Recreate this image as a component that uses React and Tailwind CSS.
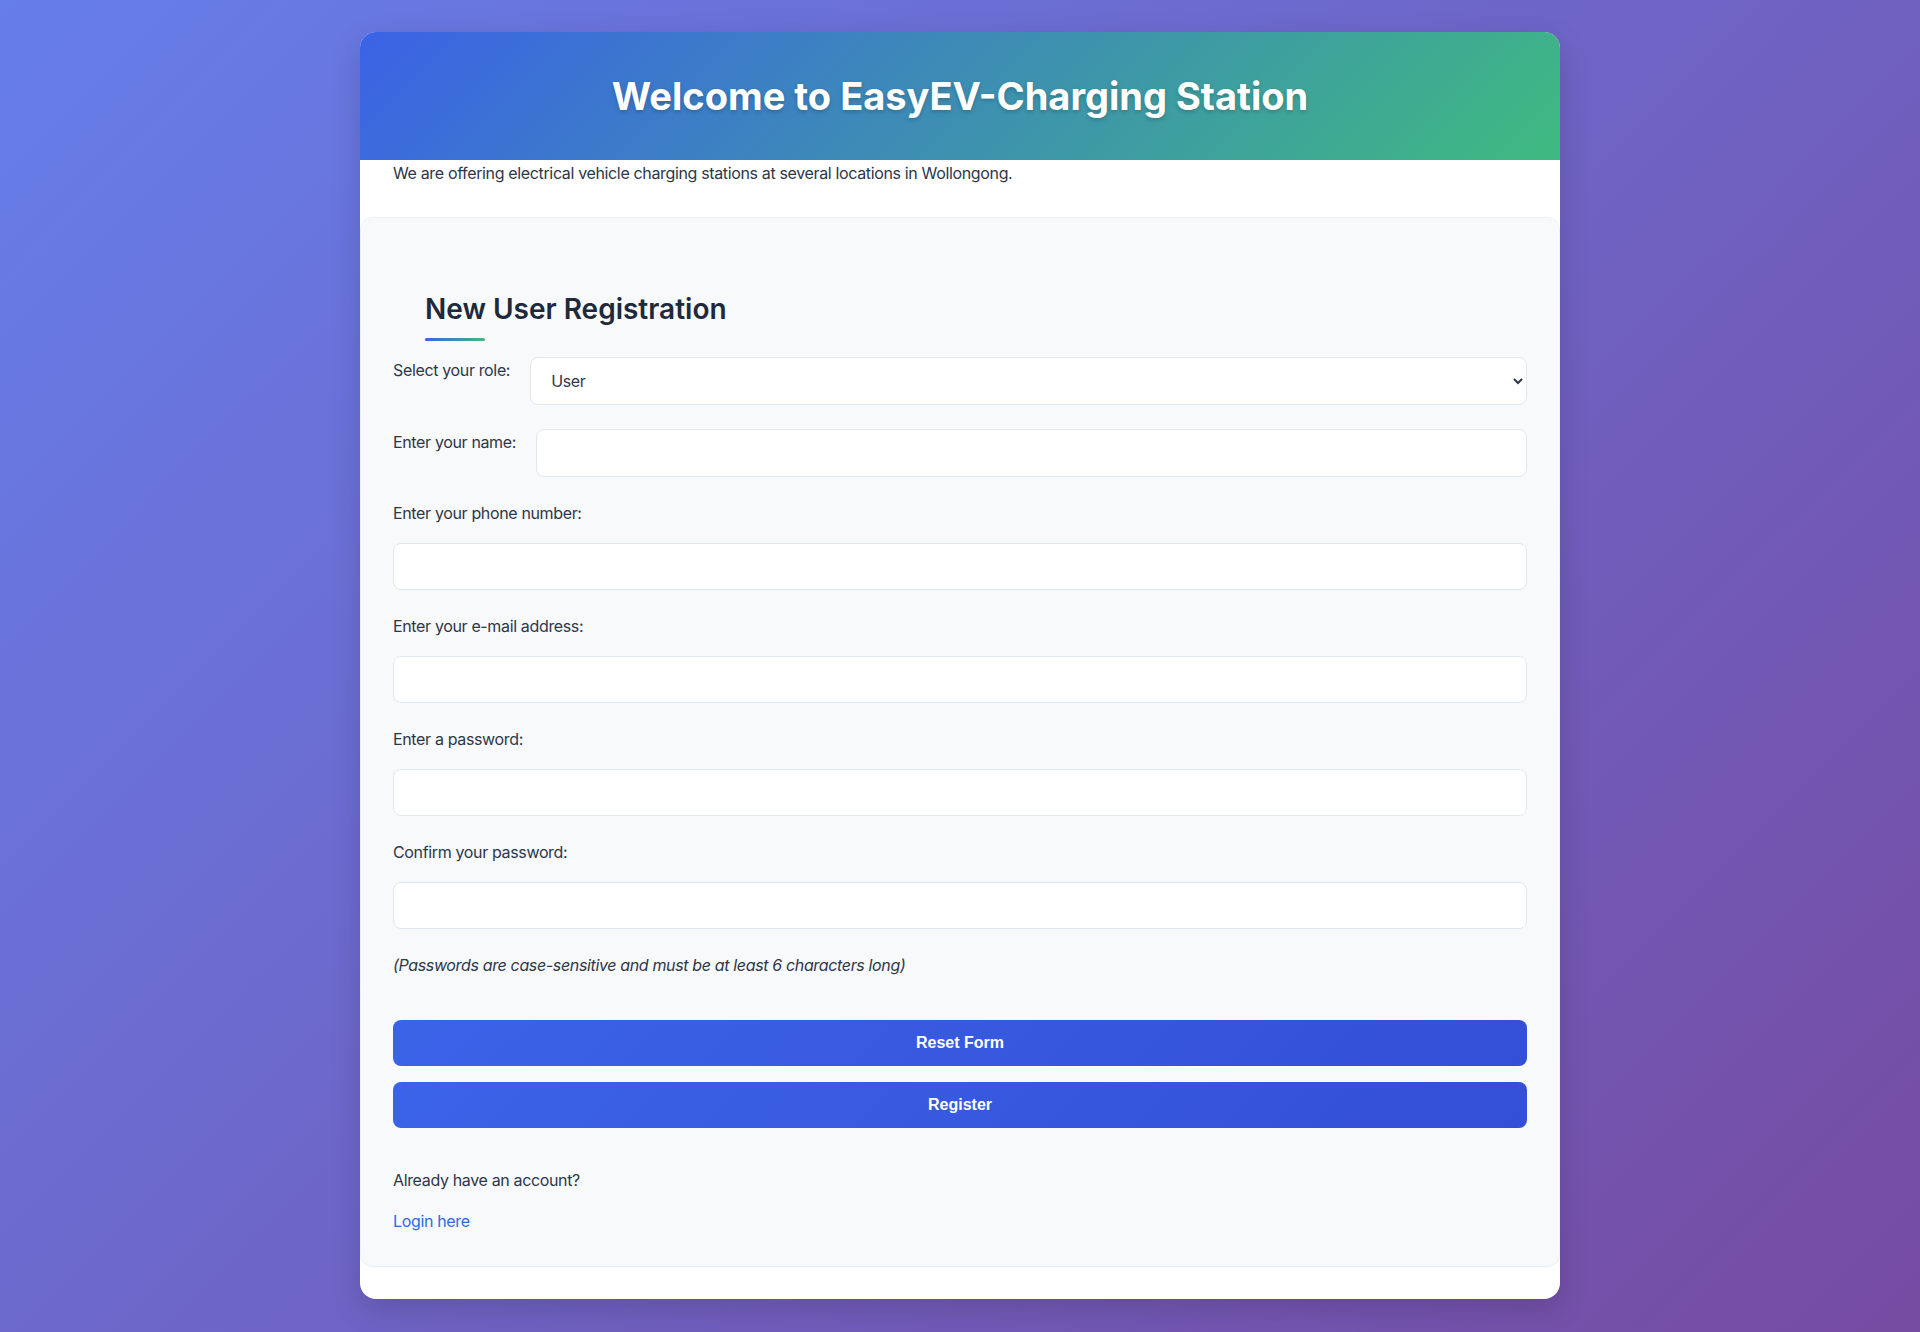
import { useState } from 'react';

const fields = [
  { id: 'phone', label: 'Enter your phone number:', type: 'tel' },
  { id: 'email', label: 'Enter your e-mail address:', type: 'email' },
  { id: 'password', label: 'Enter a password:', type: 'password' },
  { id: 'confirm', label: 'Confirm your password:', type: 'password' },
];

export default function App() {
  const [form, setForm] = useState({ role: 'User', name: '', phone: '', email: '', password: '', confirm: '' });

  const update = (key) => (e) => setForm({ ...form, [key]: e.target.value });
  const reset = () => setForm({ role: 'User', name: '', phone: '', email: '', password: '', confirm: '' });

  return (
    <div className="min-h-[1332px] p-8 bg-[linear-gradient(135deg,#667eea_0%,#764ba2_100%)] font-['Inter',sans-serif] text-[#2d3748]">
      <div className="max-w-[1200px] mx-auto bg-white rounded-2xl shadow-[0_10px_30px_rgba(0,0,0,0.15)] overflow-hidden pb-8">
        {/* Header */}
        <header className="h-32 flex items-center justify-center bg-[linear-gradient(135deg,#3b62e6_0%,#3fba80_100%)]">
          <h1 className="text-[38px] font-bold text-white [text-shadow:0_2px_4px_rgba(0,0,0,0.2)]">
            Welcome to EasyEV-Charging Station
          </h1>
        </header>
        <p className="px-[33px] text-base leading-6 mt-px tracking-[-0.022em]">
          We are offering electrical vehicle charging stations at several locations in Wollongong.
        </p>

        {/* Registration panel */}
        <section className="mt-8 bg-[#f8f9fb] border border-[#eef0f3] rounded-xl px-8 pt-[73px] pb-[33px] tracking-[-0.022em]">
          <h2 className="ml-8 text-[28px] leading-9 font-semibold text-[#1e293b] tracking-normal">New User Registration</h2>
          <div className="ml-8 mt-[11px] w-[60px] h-[3px] rounded-full bg-[linear-gradient(90deg,#3b62e6,#3fba80)]" />

          <div className="mt-4 flex items-start gap-5 mb-6">
            <label htmlFor="role" className="leading-6 pt-px whitespace-nowrap">Select your role:</label>
            <select
              id="role"
              value={form.role}
              onChange={update('role')}
              className="flex-1 h-12 px-4 bg-white border border-[#e2e8f0] rounded-lg text-base text-[#2d3748] font-['Inter',sans-serif]"
            >
              <option>User</option>
              <option>Admin</option>
            </select>
          </div>

          <div className="flex items-start gap-5 mb-6">
            <label htmlFor="name" className="leading-6 pt-px whitespace-nowrap">Enter your name:</label>
            <input
              id="name"
              type="text"
              value={form.name}
              onChange={update('name')}
              className="flex-1 h-12 px-4 bg-white border border-[#e2e8f0] rounded-lg"
            />
          </div>

          {fields.map((f) => (
            <div key={f.id} className="mb-6">
              <label htmlFor={f.id} className="block leading-6">{f.label}</label>
              <input
                id={f.id}
                type={f.type}
                value={form[f.id]}
                onChange={update(f.id)}
                className="mt-[18px] w-full h-[47px] px-4 bg-white border border-[#e2e8f0] rounded-lg"
              />
            </div>
          ))}

          <p className="mt-2 italic leading-6 text-[#2d3748]">
            (Passwords are case-sensitive and must be at least 6 characters long)
          </p>

          <div className="mt-[43px] flex flex-col gap-4 tracking-normal">
            <button
              type="button"
              onClick={reset}
              className="h-[46px] rounded-lg bg-[linear-gradient(135deg,#3b63e8_0%,#334fd6_100%)] text-white font-bold text-base font-['Liberation_Sans',Arial,sans-serif] cursor-pointer"
            >
              Reset Form
            </button>
            <button
              type="button"
              className="h-[46px] rounded-lg bg-[linear-gradient(135deg,#3b63e8_0%,#334fd6_100%)] text-white font-bold text-base font-['Liberation_Sans',Arial,sans-serif] cursor-pointer"
            >
              Register
            </button>
          </div>

          <p className="mt-10 leading-6">Already have an account?</p>
          <a href="#" className="block mt-[17px] leading-6 text-[#2f6ae8]">Login here</a>
        </section>
      </div>
    </div>
  );
}
